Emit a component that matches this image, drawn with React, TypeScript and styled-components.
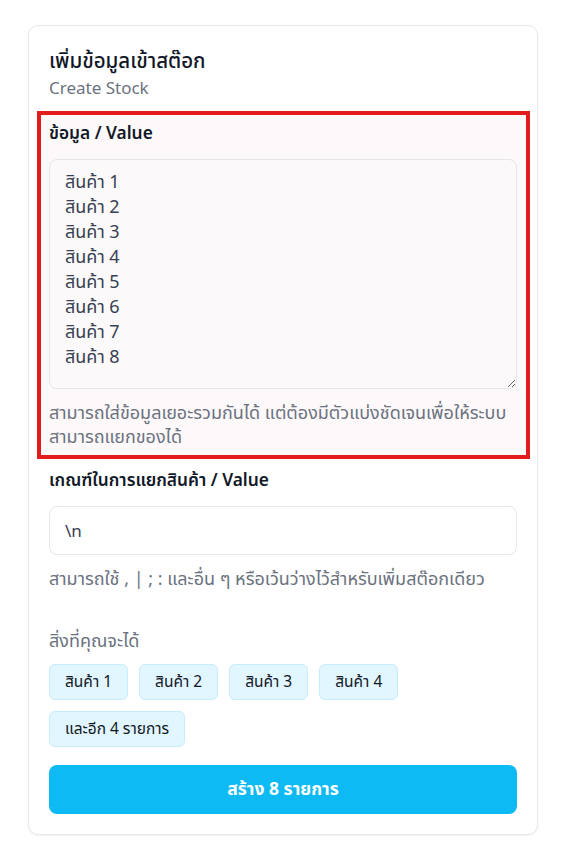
import { useState } from "react";
import styled, { createGlobalStyle } from "styled-components";

const GlobalStyle = createGlobalStyle`
  body {
    margin: 0;
    background: #ffffff;
    font-family: "Noto Sans", "Noto Sans Thai", sans-serif;
    color: #111827;
  }
  * {
    box-sizing: border-box;
  }
`;

const CreateStock = () => {
  const [value, setValue] = useState(
    Array.from({ length: 8 }, (_, i) => `สินค้า ${i + 1}`).join("\n")
  );
  const [separator, setSeparator] = useState("\\n");

  const sep = separator === "\\n" ? "\n" : separator;
  const items = sep ? value.split(sep).filter((v) => v.trim() !== "") : [value];
  const shown = items.slice(0, 4);
  const rest = items.length - shown.length;

  return (
    <Page>
      <GlobalStyle />
      <Card>
        <Title>เพิ่มข้อมูลเข้าสต๊อก</Title>
        <Subtitle>Create Stock</Subtitle>

        <Highlight>
          <Label>ข้อมูล / Value</Label>
          <TextArea value={value} onChange={(e) => setValue(e.target.value)} />
          <Hint>
            สามารถใส่ข้อมูลเยอะรวมกันได้ แต่ต้องมีตัวแบ่งชัดเจนเพื่อให้ระบบ
            สามารถแยกของได้
          </Hint>
        </Highlight>

        <Field>
          <Label>เกณฑ์ในการแยกสินค้า / Value</Label>
          <Input value={separator} onChange={(e) => setSeparator(e.target.value)} />
          <Hint>สามารถใช้ , | ; : และอื่น ๆ หรือเว้นว่างไว้สำหรับเพิ่มสต๊อกเดียว</Hint>
        </Field>

        <Preview>
          <PreviewTitle>สิ่งที่คุณจะได้</PreviewTitle>
          <Chips>
            {shown.map((item, index) => (
              <Chip key={index}>{item}</Chip>
            ))}
            {rest > 0 && <Chip>และอีก {rest} รายการ</Chip>}
          </Chips>
        </Preview>

        <SubmitButton>สร้าง {items.length} รายการ</SubmitButton>
      </Card>
    </Page>
  );
};

export default CreateStock;

const Page = styled.div`
  padding: 25px 27px 25px 28px;
`;

const Card = styled.div`
  display: flex;
  flex-direction: column;
  width: 510px;
  padding: 20px;
  border: 1px solid #e5e7eb;
  border-radius: 10px;
  background: #ffffff;
  box-shadow: 0 1px 2px rgba(0, 0, 0, 0.05);
`;

const Title = styled.div`
  font-size: 20.5px;
  line-height: 28px;
  font-weight: 500;
  color: #111827;
`;

const Subtitle = styled.div`
  margin-top: 2px;
  font-size: 17px;
  line-height: 24px;
  color: #6b7280;
`;

const Highlight = styled.div`
  display: flex;
  flex-direction: column;
  margin: 11px -13px 0 -12px;
  padding: 6px 9px 7px 8px;
  border: 4px solid #e21c1c;
  background: #fdf9fa;
`;

const Field = styled.div`
  display: flex;
  flex-direction: column;
  margin-top: 9px;
`;

const Label = styled.div`
  font-size: 17.3px;
  line-height: 24px;
  font-weight: 600;
  color: #111827;
  margin-bottom: 14px;
`;

const TextArea = styled.textarea`
  height: 230px;
  padding: 9px 15px;
  border: 1px solid #e5e7eb;
  border-radius: 8px;
  background: #fcf9fb;
  font-family: inherit;
  font-size: 18px;
  line-height: 25px;
  color: #374151;
  resize: vertical;
  outline: none;
`;

const Input = styled.input`
  height: 49px;
  padding: 0 15px;
  border: 1px solid #e5e7eb;
  border-radius: 8px;
  background: #ffffff;
  font-family: inherit;
  font-size: 17px;
  color: #374151;
  outline: none;
`;

const Hint = styled.div`
  margin-top: 11px;
  font-size: 18px;
  line-height: 24px;
  color: #6b7280;
`;

const Preview = styled.div`
  display: flex;
  flex-direction: column;
  margin-top: 38px;
`;

const PreviewTitle = styled.div`
  font-size: 18px;
  line-height: 24px;
  color: #6b7280;
  margin-bottom: 12px;
`;

const Chips = styled.div`
  display: flex;
  flex-wrap: wrap;
  gap: 11px;
  width: 380px;
`;

const Chip = styled.div`
  display: flex;
  align-items: center;
  height: 36px;
  padding: 0 15px;
  border: 1px solid #c7ecfc;
  border-radius: 6px;
  background: #e1f6fe;
  font-size: 15.5px;
  color: #111827;
`;

const SubmitButton = styled.button`
  margin-top: 18px;
  height: 49px;
  border: none;
  border-radius: 8px;
  background: #0dbaf4;
  color: #ffffff;
  font-family: inherit;
  font-size: 17.5px;
  font-weight: 700;
  cursor: pointer;
`;
